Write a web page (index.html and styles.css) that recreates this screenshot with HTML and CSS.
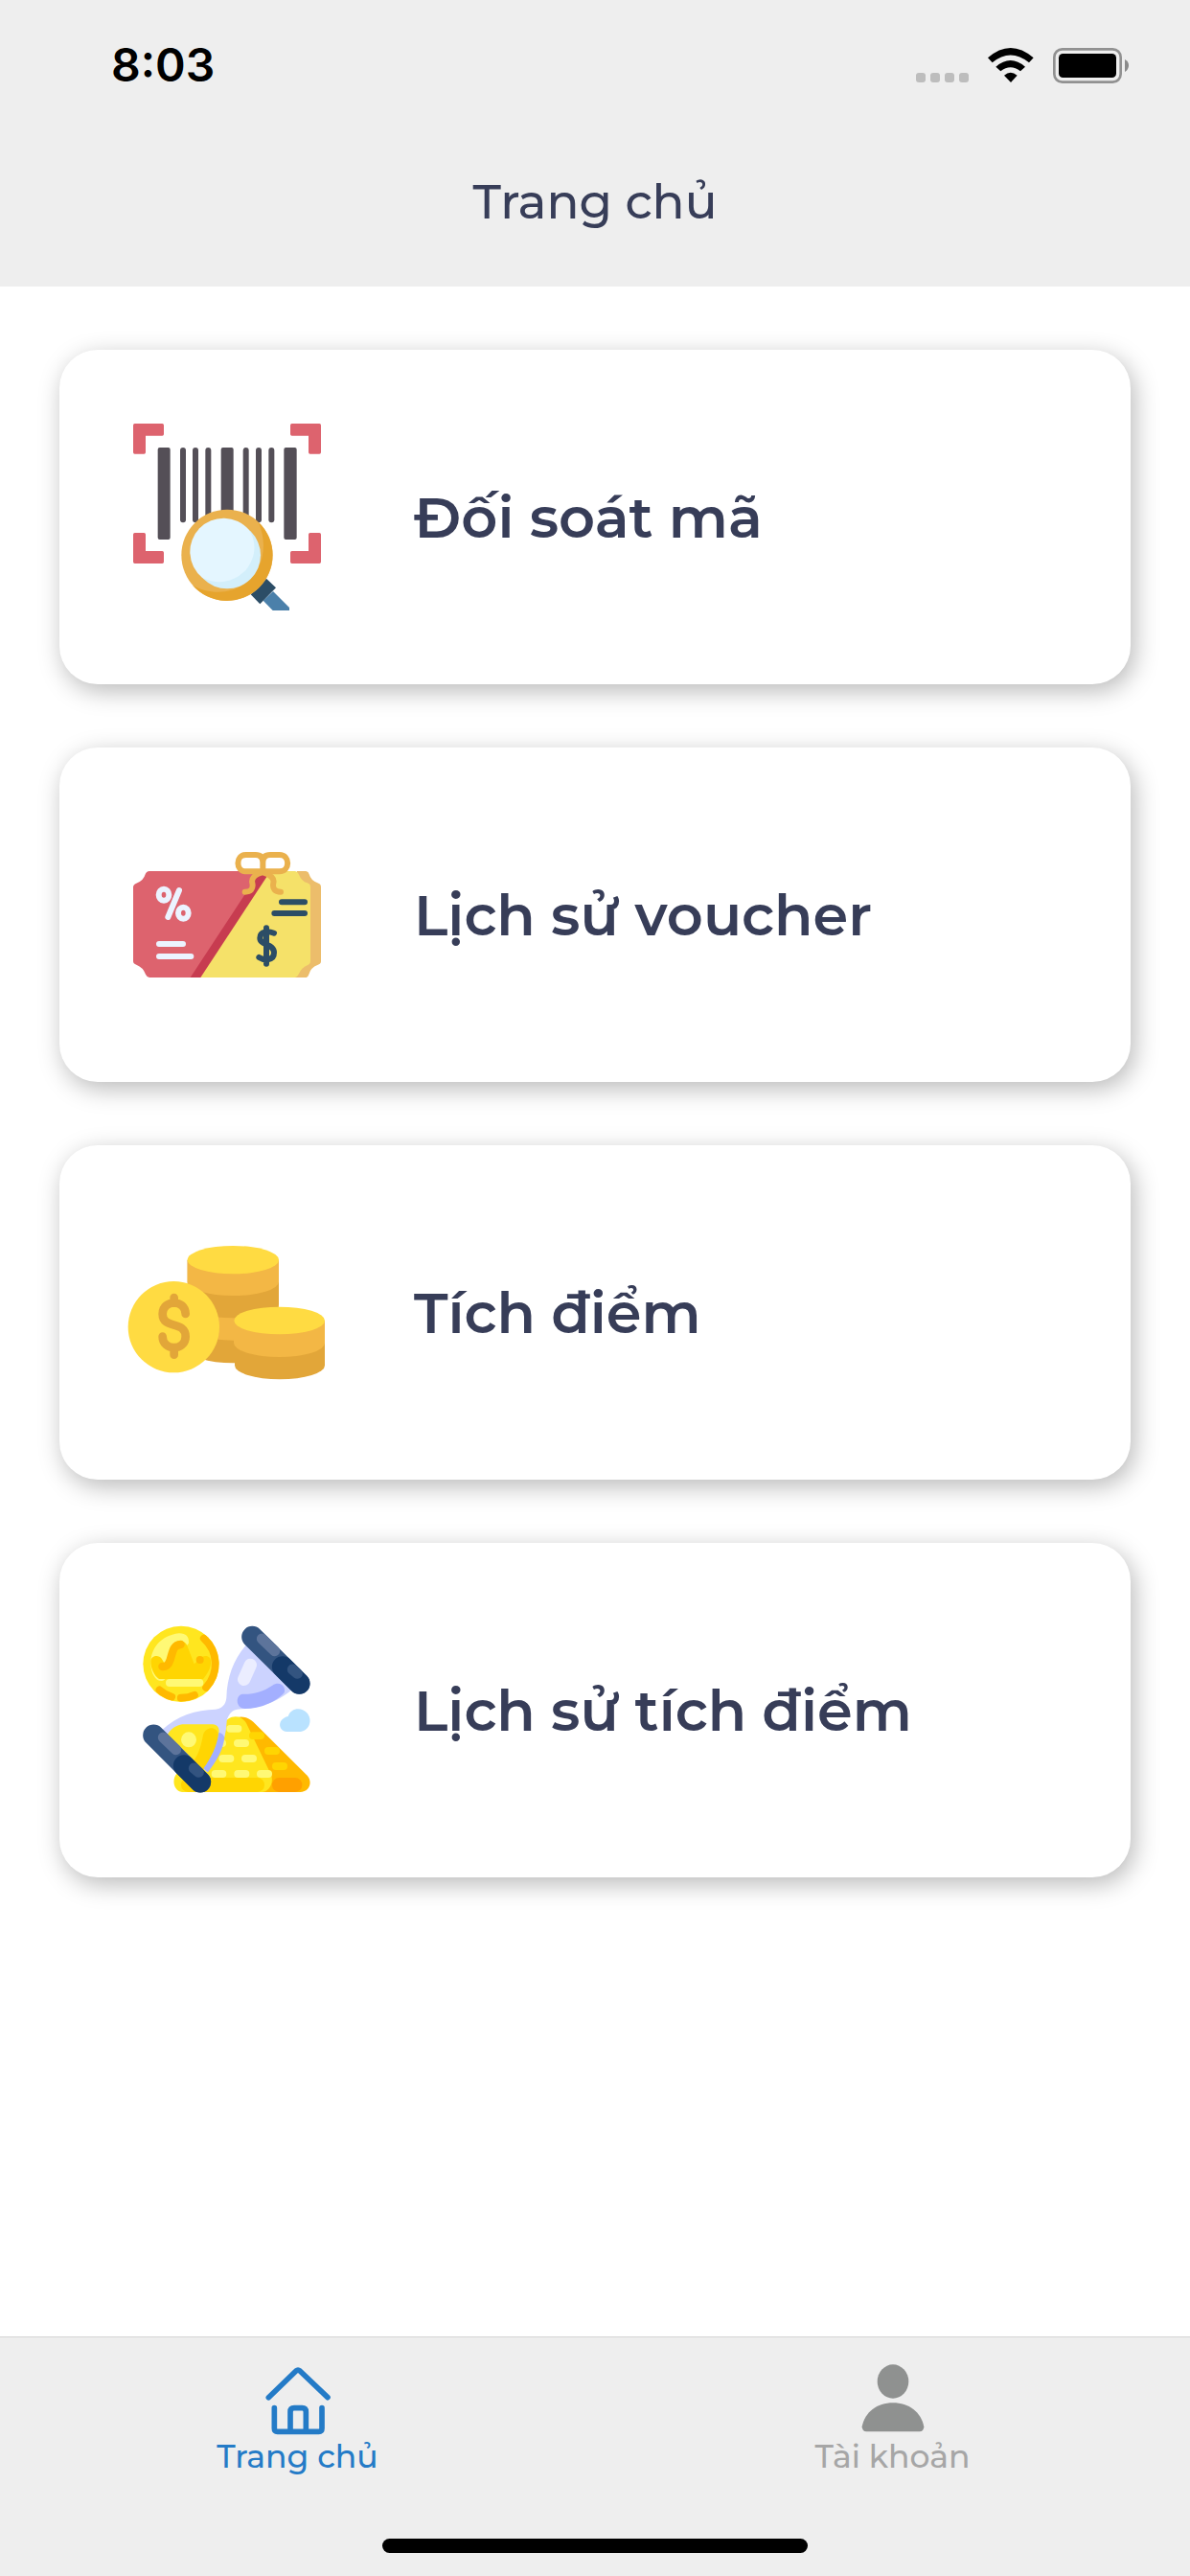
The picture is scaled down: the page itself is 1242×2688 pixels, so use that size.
FILE: index.html
```html
<!DOCTYPE html>
<html lang="vi">
<head>
  <meta charset="UTF-8">
  <meta name="viewport" content="width=device-width, initial-scale=1">
  <title>Trang chủ</title>
  <link rel="stylesheet" href="styles.css">
</head>
<body>

  <header class="header">
    <div class="status-bar">
      <span class="time">8:03</span>
      <div class="status-icons">
        <svg width="55" height="37" viewBox="81 57 165 111" fill="#bdbdbd">
          <rect x="81" y="135" width="30" height="30" rx="9"/>
          <rect x="126" y="135" width="30" height="30" rx="9"/>
          <rect x="171" y="135" width="30" height="30" rx="9"/>
          <rect x="216" y="135" width="30" height="30" rx="9"/>
        </svg>
        <svg width="48" height="37" viewBox="305 57 144 111">
          <path d="M305 88Q376 26 448 88L434 103Q376 56 319 103Z"/>
          <path d="M330 116Q376 76 422 116L407 130Q376 106 345 130Z"/>
          <path d="M356 143Q376 126 397 143L377 165Z"/>
        </svg>
        <svg width="79" height="37" viewBox="507 57 237 111">
          <rect x="511" y="61" width="208" height="103" rx="25" fill="none" stroke="#919191" stroke-width="8"/>
          <rect x="525" y="75" width="180" height="75" rx="13"/>
          <path d="M732 93Q744 99 744 112T732 132Z" fill="#8a8a8a"/>
        </svg>
      </div>
    </div>
    <h1 class="title">Trang chủ</h1>
  </header>

  <main class="menu">
    <a class="card" href="#">
      <svg class="card-icon" viewBox="0 0 720 720">
        <!-- khung quét -->
        <g fill="#dd636e">
          <path d="M62 66H148Q153 66 153 71V99Q153 104 148 104H96V156Q96 161 91 161H62Q57 161 57 156V71Q57 66 62 66Z"/>
          <path d="M554 66H640Q645 66 645 71V156Q645 161 640 161H611Q606 161 606 156V104H554Q549 104 549 99V71Q549 66 554 66Z"/>
          <path d="M62 408H91Q96 408 96 413V465H148Q153 465 153 470V499Q153 504 148 504H62Q57 504 57 499V413Q57 408 62 408Z"/>
          <path d="M611 408H640Q645 408 645 413V499Q645 504 640 504H554Q549 504 549 499V470Q549 465 554 465H606V413Q606 408 611 408Z"/>
        </g>
        <!-- mã vạch -->
        <g fill="#544f57">
          <rect x="134" y="141" width="39" height="288" rx="6"/>
          <rect x="204" y="141" width="18" height="235" rx="9"/>
          <rect x="243" y="141" width="18" height="235" rx="9"/>
          <rect x="283" y="141" width="18" height="235" rx="9"/>
          <rect x="332" y="141" width="39" height="235" rx="6"/>
          <rect x="401" y="141" width="18" height="235" rx="9"/>
          <rect x="441" y="141" width="18" height="235" rx="9"/>
          <rect x="481" y="141" width="18" height="235" rx="9"/>
          <rect x="529" y="141" width="40" height="288" rx="6"/>
        </g>
        <!-- kính lúp -->
        <path d="M464 620L495 591L546 642V651H494Z" fill="#4b80aa"/>
        <path d="M425 601L474 551L504 580L454 631Z" fill="#2c4d66"/>
        <circle cx="351" cy="478" r="143" fill="#eab14d"/>
        <path d="M449 374A143 143 0 1 1 243 572C290 600 360 602 404 568C462 530 482 450 449 374Z" fill="#e6a42d"/>
        <circle cx="351" cy="478" r="105" fill="#d3effb"/>
        <path d="M419 398C448 440 438 490 410 524C372 564 322 572 273 548A105 105 0 1 1 419 398Z" fill="#e4f6ff"/>
      </svg>
      <span class="card-label">Đối soát mã</span>
    </a>

    <a class="card" href="#">
      <svg class="card-icon" viewBox="0 0 720 570">
        <path d="M570 147H598Q606 148 608 157Q614 177 634 184Q645 187 645 197V430Q645 438 634 441Q613 449 607 470Q604 480 595 480H560Z" fill="#ecbd6b"/>
        <path d="M470 147H562Q572 148 576 158Q584 178 602 184Q612 187 612 197V430Q612 438 602 442Q584 450 576 468Q570 480 562 480H266Z" fill="#f5e169"/>
        <path d="M440 147H475V165L268 480H225Z" fill="#c73c50"/>
        <path d="M108 147H455L236 480H108Q99 478 96 470Q88 448 67 440Q57 437 57 429V197Q57 189 67 185Q89 178 95 157Q98 148 108 147Z" fill="#dd636e"/>
        <g fill="none" stroke="#ecf3ff" stroke-width="18" stroke-linecap="round">
          <ellipse cx="153" cy="221" rx="16" ry="18"/>
          <ellipse cx="214" cy="278" rx="16" ry="18"/>
          <path d="M201 207L166 291M138 375H213M138 414H238"/>
        </g>
        <g fill="none" stroke="#2c4d66" stroke-width="18" stroke-linecap="round">
          <path d="M522 244H594M499 279H594"/>
          <path d="M474 325V437M498 341C478 333 454 335 454 356C454 380 498 373 498 402C498 427 468 428 451 417"/>
        </g>
        <path d="M410 105H438Q454 106 454 124V138H410C389 138 389 105 410 105ZM488 105H515C537 105 537 138 515 138H473V124Q473 106 488 105Z" fill="#fff"/>
        <g fill="none" stroke="#eab14d" stroke-width="18" stroke-linecap="round" stroke-linejoin="round">
          <path d="M463 148H410C377 148 377 96 410 96H440Q463 96 463 120V148H515C549 148 549 96 515 96H486Q463 96 463 120"/>
          <path d="M460 151C438 158 426 170 430 184C434 203 425 212 407 212M465 151C489 160 500 169 496 184C492 202 501 212 519 212"/>
        </g>
      </svg>
      <span class="card-label">Lịch sử voucher</span>
    </a>

    <a class="card" href="#">
      <svg class="card-icon" viewBox="0 14 720 570">
        <path d="M227 133H513V412A143 44 0 0 1 227 412Z" fill="#e2a639"/>
        <path d="M227 271A143 44 0 0 0 513 271V341A143 44 0 0 1 227 341Z" fill="#f3b745"/>
        <path d="M227 133H513V201A143 44 0 0 1 227 201Z" fill="#f3b745"/>
        <ellipse cx="370" cy="133" rx="143" ry="44" fill="#ffdb42"/>
        <path d="M375 323H657V463A141 44 0 0 1 375 463Z" fill="#e2a639"/>
        <path d="M372 323H657V393A142 44 0 0 1 372 393Z" fill="#f3b745"/>
        <ellipse cx="515" cy="323" rx="142" ry="43" fill="#ffdb42"/>
        <circle cx="184" cy="343" r="143" fill="#ffdb42"/>
        <path d="M221 302C221 256 149 256 149 302C149 352 221 322 221 373C221 419 149 419 149 373M185 251V268M185 407V430" fill="none" stroke="#e2a639" stroke-width="26" stroke-linecap="round"/>
      </svg>
      <span class="card-label">Tích điểm</span>
    </a>

    <a class="card" href="#">
      <svg class="card-icon" viewBox="-30 0 720 630">
        <!-- đồng xu -->
        <circle cx="177" cy="169" r="119" fill="#ffe61f"/>
        <path d="M201 104C203 82 190 72 170 73C112 80 82 121 82 166C82 202 99 225 118 222C130 220 132 205 126 190Z" fill="#fff975"/>
        <path d="M82 159C84 143 106 139 116 152L127 170L149 112C157 92 189 91 196 112L218 169L244 146C256 141 269 146 270 160C272 181 257 204 246 216H108C93 207 81 181 82 159Z" fill="#ffd502"/>
        <path d="M118 177C133 179 139 168 143 156C151 131 152 109 176 108" fill="none" stroke="#ffb900" stroke-width="25" stroke-linecap="round"/>
        <circle cx="236" cy="156" r="12" fill="#ffb900"/>
        <rect x="129" y="216" width="118" height="24" rx="12" fill="#fff975"/>
        <path d="M248 89C293 129 297 196 255 243M109 250Q126 265 148 272M176 275Q201 275 219 266" fill="none" stroke="#ffb900" stroke-width="23" stroke-linecap="round"/>
        <!-- đám mây -->
        <path d="M512 333C521 305 556 303 573 324C591 350 575 381 547 381H508C480 379 477 341 512 333Z" fill="#b9e2ff"/>
        <!-- kim tự tháp -->
        <path d="M340 345C355 328 386 333 403 350L572 518C590 538 579 570 550 570H425Z" fill="#ffb900"/>
        <path d="M308 360C324 328 363 324 381 354L459 516C469 545 449 570 429 570H180C151 566 147 526 166 509Z" fill="#ffe61f"/>
        <rect x="177" y="525" width="261" height="45" rx="22" fill="#ffd502"/>
        <rect x="462" y="525" width="94" height="45" rx="22" fill="#ffa000"/>
        <g fill="#fff975">
          <rect x="319" y="360" width="48" height="23" rx="11"/>
          <rect x="270" y="405" width="48" height="24" rx="12"/>
          <rect x="342" y="405" width="48" height="24" rx="12"/>
          <rect x="295" y="453" width="48" height="24" rx="12"/>
          <rect x="366" y="453" width="48" height="24" rx="12"/>
          <rect x="272" y="501" width="47" height="24" rx="12"/>
          <rect x="343" y="501" width="48" height="24" rx="12"/>
          <rect x="414" y="501" width="48" height="24" rx="12"/>
        </g>
        <g fill="#ffd502">
          <rect x="390" y="382" width="48" height="23" rx="11"/>
          <rect x="438" y="429" width="48" height="24" rx="12"/>
          <rect x="462" y="477" width="48" height="24" rx="12"/>
        </g>
        <!-- đồng hồ cát -->
        <path d="M382 108L524 250C468 298 403 309 353 311C336 312 323 330 320 348C318 410 292 465 259 508L117 376C163 331 225 312 285 311C308 309 317 293 319 275C321 209 342 153 382 108Z" fill="#ccd3ff"/>
        <path d="M135 389C151 365 170 358 187 358H275C294 359 298 373 295 388C292 430 269 466 247 500Z" fill="#ffe61f"/>
        <path d="M246 391C255 362 291 364 293 390C291 430 268 467 247 500L217 471C233 450 241 420 246 391Z" fill="#ffd502"/>
        <path d="M295 383Q309 386 313 399C309 438 287 474 261 508L247 496C271 463 290 425 295 383Z" fill="#a3afff"/>
        <path d="M370 263C405 264 435 255 463 236C485 220 507 239 500 259C473 290 421 309 377 309C347 308 346 266 370 263Z" fill="#a3afff"/>
        <path d="M394 172L374 217" stroke="#ebedff" stroke-width="40" stroke-linecap="round"/>
        <circle cx="201" cy="406" r="24" fill="#fff975"/>
        <g fill="none" stroke-linecap="round">
          <path d="M400 84L547 230M91 392L237 538" stroke="#335480" stroke-width="67"/>
          <path d="M495 178L547 230M186 487L237 538" stroke="#143968" stroke-width="67"/>
          <path d="M430 90L470 128M121 399L161 437" stroke="#5d749b" stroke-width="33"/>
          <path d="M526 186L541 199M217 495L232 508" stroke="#335480" stroke-width="33"/>
        </g>
      </svg>
      <span class="card-label">Lịch sử tích điểm</span>
    </a>
  </main>

  <footer class="footer">
    <nav class="tabs">
      <a class="tab active" href="#">
        <svg class="tab-icon" viewBox="223 140 216 222" fill="none" stroke="currentColor" stroke-width="17" stroke-linecap="round" stroke-linejoin="round">
          <path d="M239 244L325 161Q331 156 337 161L424 244"/>
          <path d="M257 277V341Q257 351 267 351H396Q406 351 406 341V277M307 351V289Q307 277 319 277H344Q356 277 356 289V351"/>
        </svg>
        <span>Trang chủ</span>
      </a>
      <a class="tab" href="#">
        <svg class="tab-icon" viewBox="292 140 216 222" fill="#8f9190">
          <ellipse cx="400" cy="194" rx="49" ry="53"/>
          <path d="M303 336C312 290 350 261 400 261S488 290 497 336Q496 351 483 351H317Q304 351 303 336Z"/>
        </svg>
        <span>Tài khoản</span>
      </a>
    </nav>
    <div class="home-indicator"></div>
  </footer>

</body>
</html>
```
FILE: styles.css
```css
* {
  box-sizing: border-box;
}

body {
  margin: 0;
  min-height: 100vh;
  display: flex;
  flex-direction: column;
  font-family: Montserrat, Inter, sans-serif;
  background: #fff;
  color: #373d58;
}

a {
  color: inherit;
  text-decoration: none;
}

svg {
  display: block;
}

.header {
  background: #eee;
  padding-bottom: 58px;
}

.status-bar {
  display: flex;
  justify-content: space-between;
  align-items: center;
  padding: 36px 64px 0 116px;
}

.time {
  font-family: Inter, sans-serif;
  font-size: 48px;
  line-height: 64px;
  font-weight: 600;
  color: #000;
}

.status-icons {
  display: flex;
  gap: 20px;
}

.title {
  margin: 81px 0 0;
  text-align: center;
  font-size: 50px;
  line-height: 60px;
  font-weight: 500;
}

.menu {
  flex: 1;
  display: flex;
  flex-direction: column;
  gap: 66px;
  padding: 66px 62px;
}

.card {
  display: flex;
  align-items: center;
  gap: 72px;
  min-height: 349px;
  padding: 40px 58px;
  border-radius: 40px;
  background: #fff;
  box-shadow: 4px 7px 26px rgba(0, 0, 0, 0.28);
}

.card-icon {
  width: 240px;
}

.card-label {
  font-size: 59px;
  line-height: 72px;
  font-weight: 600;
}

.footer {
  background: #eee;
  border-top: 1px solid #d4d4d4;
  padding: 28px 0 24px;
}

.tabs {
  display: flex;
}

.tab {
  flex: 1;
  display: flex;
  flex-direction: column;
  align-items: center;
  font-size: 33px;
  line-height: 44px;
  font-weight: 500;
  color: #a6a6a6;
}

.tab.active {
  color: #247bc7;
}

.tab-icon {
  width: 72px;
  height: 74px;
}

.home-indicator {
  width: 444px;
  height: 15px;
  margin: 64px auto 0;
  border-radius: 8px;
  background: #000;
}
```
